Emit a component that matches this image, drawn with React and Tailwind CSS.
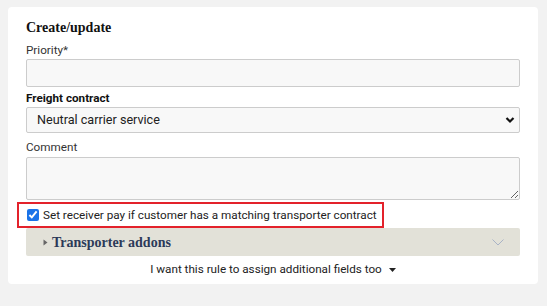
import React from 'react';

const sans = "font-['Roboto','Liberation_Sans',sans-serif]";
const serif = "font-['Liberation_Serif','DejaVu_Serif',serif]";

export default function App() {
  return (
    <div className={`min-h-[306px] w-[547px] bg-[#f2f2f2] pt-[7px] ${sans} text-[11.7px] text-[#222]`}>
      <div className="ml-2 flex w-[530px] flex-col rounded-[4px] bg-white px-[18px] pt-[13px] pb-[5px]">
        <h2 className={`${serif} text-[14px] font-bold leading-[16px] text-[#111]`}>Create/update</h2>

        <label className="mt-[5px] leading-[18px] text-[#333]">Priority*</label>
        <input
          type="text"
          className="h-[28px] w-full rounded-[2px] border border-[#cccccc] bg-[#f8f8f8] px-2 outline-none"
        />

        <label className="mt-[2px] font-bold leading-[18px] text-[#111]">Freight contract</label>
        <div className="relative h-[26px]">
          <select className="h-full w-full appearance-none rounded-[2px] border border-[#cccccc] bg-[#f8f8f8] pl-[10px] text-[12.6px] text-[#222] outline-none">
            <option>Neutral carrier service</option>
          </select>
          <svg className="pointer-events-none absolute top-[9px] right-[5px]" width="10" height="8" viewBox="0 0 10 8">
            <path d="M1.5 2 L5 5.5 L8.5 2" fill="none" stroke="#111" strokeWidth="2.2" />
          </svg>
        </div>

        <label className="mt-[5px] mb-[1px] leading-[18px] text-[#333]">Comment</label>
        <textarea className="block h-[43px] w-full resize-y rounded-[2px] border border-[#cccccc] bg-[#f8f8f8] px-2 outline-none" />

        <div className="-mx-[9px] mt-[2px] flex h-[26px] w-fit items-center gap-[4px] border-2 border-[#e3222b] pr-[5px] pl-[8px]">
          <input type="checkbox" defaultChecked className="m-0 h-[12px] w-[12px] accent-[#1a73e8]" />
          <span className="leading-[18px] text-[#222]">Set receiver pay if customer has a matching transporter contract</span>
        </div>

        <div className="flex h-[28px] items-center rounded-[2px] bg-[#e2e1d8] pr-[16px] pl-[17px]">
          <svg width="5" height="7" viewBox="0 0 5 7" className="mr-[4px]">
            <path d="M0.5 0.5 L4.5 3.5 L0.5 6.5 Z" fill="#666" />
          </svg>
          <span className={`${serif} text-[14px] font-bold text-[#2c3a58]`}>Transporter addons</span>
          <svg className="ml-auto" width="12" height="7" viewBox="0 0 12 7">
            <path d="M0.5 0.5 L6 6 L11.5 0.5" fill="none" stroke="#a9b3c6" strokeWidth="1" />
          </svg>
        </div>

        <div className="mt-[5px] flex h-[18px] items-center justify-center gap-[7px] text-[#222]">
          <span>I want this rule to assign additional fields too</span>
          <svg width="7" height="4" viewBox="0 0 7 4">
            <path d="M0 0 L7 0 L3.5 4 Z" fill="#222" />
          </svg>
        </div>
      </div>
    </div>
  );
}
